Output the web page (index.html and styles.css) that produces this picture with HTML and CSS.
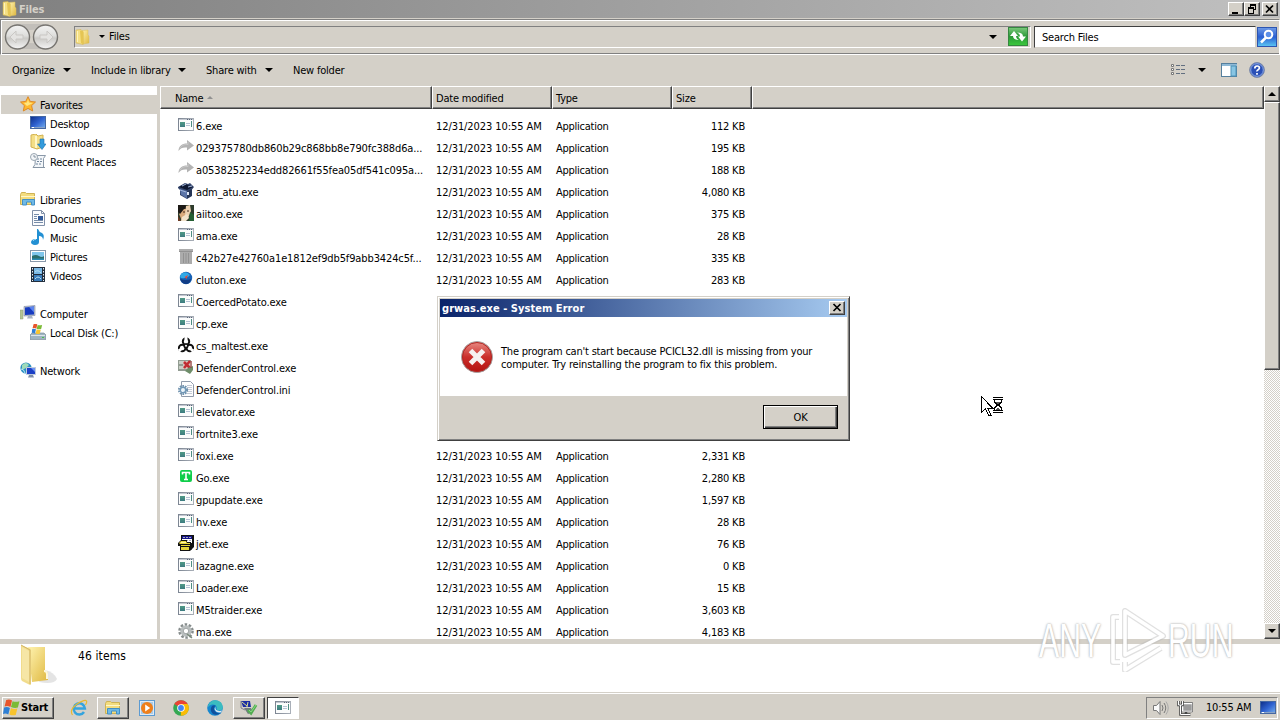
FILE: index.html
```html
<!DOCTYPE html>
<html lang="en">
<head>
    <meta charset="UTF-8">
    <meta name="viewport" content="width=device-width, initial-scale=1.0">
    <title>Files</title>
    <link rel="stylesheet" href="styles.css">
</head>
<body>
    <!-- Icon sprite -->
    <svg class="sprite" width="0" height="0">
        <defs>
            <linearGradient id="gold" x1="0" y1="0" x2="1" y2="1"><stop offset="0" stop-color="#fff3b0"/><stop offset="1" stop-color="#dfb840"/></linearGradient>
            <linearGradient id="blue" x1="0" y1="0" x2="1" y2="1"><stop offset="0" stop-color="#0c2c86"/><stop offset="0.5" stop-color="#2f62d0"/><stop offset="1" stop-color="#79b2ee"/></linearGradient>
            <linearGradient id="round" x1="0" y1="0" x2="0" y2="1"><stop offset="0" stop-color="#f4f4f3"/><stop offset="0.45" stop-color="#dededc"/><stop offset="0.55" stop-color="#cbcac7"/><stop offset="1" stop-color="#f5f5f5"/></linearGradient>
            <linearGradient id="red" x1="0" y1="0" x2="0" y2="1"><stop offset="0" stop-color="#e98d86"/><stop offset="0.5" stop-color="#cb2f2b"/><stop offset="1" stop-color="#b3110f"/></linearGradient>
            <linearGradient id="go" x1="0" y1="0" x2="0" y2="1"><stop offset="0" stop-color="#7cc87c"/><stop offset="0.5" stop-color="#2c9a38"/><stop offset="1" stop-color="#3cc93c"/></linearGradient>
            <linearGradient id="find" x1="0" y1="0" x2="0" y2="1"><stop offset="0" stop-color="#6f9be6"/><stop offset="0.5" stop-color="#2a5fd2"/><stop offset="1" stop-color="#5cc8f4"/></linearGradient>
            <linearGradient id="pane" x1="0" y1="0" x2="1" y2="0"><stop offset="0" stop-color="#7d8693"/><stop offset="1" stop-color="#a9afb8"/></linearGradient>
            <linearGradient id="pageedge" x1="0" y1="0" x2="0" y2="1"><stop offset="0" stop-color="#4f9a86"/><stop offset="1" stop-color="#3c7a80"/></linearGradient>
        </defs>
        <symbol id="i-exe" viewBox="0 0 16 16">
            <rect x="0.5" y="1.500" width="15" height="12" fill="#fbfcfc" stroke="url(#pane)"/>
            <path d="M1 2.500h14" stroke="#c3c8d1"/><path d="M9 2.500h1m1 0h1m1 0h1" stroke="#5b6678"/>
            <rect x="2" y="5" width="5" height="5" fill="url(#pageedge)"/>
            <path d="M8 6.500h4M8 8.500h4" stroke="#b5c3d5"/><path d="M13.500 4v6" stroke="#4d8d83"/>
        </symbol>
        <symbol id="i-share" viewBox="0 0 16 16">
            <path d="M.5 12C.5 7 4 4.500 9 4.500V1l7 5.500-7 5V8.500C5 8 2.500 9 .5 12z" fill="#b3b3b3"/><path d="M2 9.500C4 5.500 7 5.500 10 5.500V3" fill="none" stroke="#cacaca"/>
        </symbol>
        <symbol id="i-box" viewBox="0 0 16 16">
            <path d="M0 4l7-4 3 1 2-1 4 4-2 2.500v6.500l-5 3-7-4V7L0 5z" fill="#34456c"/><path d="M1 4l6-3 8 3-6 3z" fill="#0d1731"/>
            <path d="M2 6l7 2v7.500l-6-4z" fill="#5c75a8"/><path d="M9 8l5-2v6.500l-5 3z" fill="#253555"/><path d="M4 3l4-2M10 4l4-1M2 7l6 2" stroke="#a3b7dc"/><path d="M9 9h2v3H9z" fill="#dfe8f8"/>
        </symbol>
        <symbol id="i-photo" viewBox="0 0 16 16">
            <rect width="16" height="16" fill="#2d3b2c"/><path d="M3 3l5 1 2 6-3 6H4L1 9z" fill="#d9aa7c"/><path d="M0 0h7l3 3-4 1-4 5-2-2z" fill="#1b1815"/>
            <path d="M8 1l4-1 1 6-3 7-3-3z" fill="#ecd1b1"/><path d="M4 12l5-3 2 4-3 3H3z" fill="#f3e3ca"/><path d="M12 7l4 3v6h-5z" fill="#245f32"/><path d="M5 7h2M9 6h2" stroke="#402619"/><path d="M0 11l3 5H0z" fill="#6b3a22"/>
        </symbol>
        <symbol id="i-bin" viewBox="0 0 16 16">
            <path d="M1 0h14v3H1zM2 3h12v12H2z" fill="#acacac"/><path d="M5.500 4v10M8 4v10M10.500 4v10M1 2.500h14" stroke="#929292"/>
        </symbol>
        <symbol id="i-globe" viewBox="0 0 16 16">
            <circle cx="8" cy="7" r="6.200" fill="#1761b5"/><path d="M3 3q5-4 9 1-2 3-5 3-4 1-5-1z" fill="#31a8e6"/><path d="M2 8q6 2 11 0-1 5-5 5t-6-5z" fill="#113d86"/><path d="M10 4L8.500 8 6.500 6z" fill="#e34a3a"/>
        </symbol>
        <symbol id="i-hazard" viewBox="0 0 16 16">
            <g fill="none" stroke="#111" stroke-width="2"><circle cx="8" cy="4.500" r="3.200"/><circle cx="4.200" cy="11" r="3.300"/><circle cx="11.800" cy="11" r="3.300"/></g>
            <path d="M6.500 0h3v3h-3zM0 12.500l2.500-1.500 1.500 2-2.500 2.500zM16 12.500L13.500 11 12 13l2.500 2.500z" fill="#fff"/><circle cx="8" cy="8.800" r="2.600" fill="#111"/><circle cx="8" cy="8.800" r="1" fill="#fff"/>
        </symbol>
        <symbol id="i-defctl" viewBox="0 0 16 16">
            <rect x="0" y="1" width="13" height="11" fill="#929c92"/><path d="M1 2h4v3H1zM1 7h4v3H1z" fill="#c8cfc5"/><path d="M5 2h9v8H5z" fill="#d9c3bd"/>
            <path d="M6 3l6 6M12 2L6 9" stroke="#c02c31" stroke-width="2.500"/><path d="M10 9l5-2v4l-3 4-5-3z" fill="#6e8d69"/><path d="M13 2v7" stroke="#8c3c3a"/>
        </symbol>
        <symbol id="i-ini" viewBox="0 0 16 16">
            <path d="M3.500 0.500h9l3 3v12h-12z" fill="#fdfdfe" stroke="#909bab"/><path d="M9 4.500h5M9 6.500h5M10 8.500h4M10 10.500h4M9 12.500h5" stroke="#c3cad5"/>
            <circle cx="5" cy="9" r="4.100" fill="none" stroke="#6e91ad" stroke-width="2" stroke-dasharray="1.600 1"/><circle cx="5" cy="9" r="2.700" fill="#eaf3fa" stroke="#7198b7" stroke-width="1.400"/>
        </symbol>
        <symbol id="i-t" viewBox="0 0 16 16">
            <rect x="2" y="1" width="12" height="12" rx="2" fill="#0fce4a"/><path d="M4.500 5.500V3.500h7v2M8 3.500v7M6 10.500h4" fill="none" stroke="#fff" stroke-width="1.600"/>
        </symbol>
        <symbol id="i-jet" viewBox="0 0 16 16">
            <path d="M3 0h13v12l-3 3H3z" fill="#111"/><path d="M4 1h10v3H4z" fill="#15158c"/><path d="M4 4h10v4H4z" fill="#fff"/><path d="M5 2.500h8M5 5.500h8" stroke="#aab" stroke-dasharray="2 1"/>
            <path d="M0 8l3-3h6v2h4v3h1v4l-2 2H2v-5H0z" fill="#111"/><path d="M1 8l2-2h5l1 2h3v1H2zM3 10h9v1H3zM3 12h8v3H3z" fill="#e6d53a"/><path d="M3 7.500h5" stroke="#fff8ad"/>
        </symbol>
        <symbol id="i-gear" viewBox="0 0 16 16">
            <circle cx="8" cy="8" r="6.300" fill="none" stroke="#878d8d" stroke-width="3" stroke-dasharray="2.400 1.550"/><circle cx="8" cy="8" r="4.200" fill="#fff" stroke="#b9bebe" stroke-width="3"/><circle cx="8" cy="8" r="2.700" fill="none" stroke="#8b9191" stroke-width=".7"/><path d="M9 11l5 4" stroke="#7b8b7b" stroke-width="1.500"/>
        </symbol>
        <symbol id="i-folder" viewBox="0 0 16 16">
            <path d="M7 1.500l6-.5v5l1 1v7l-6 1z" fill="url(#gold)" stroke="#d8bd5c" stroke-width=".5"/><path d="M1 1l5-.5 2 2.500v12.500L1 14z" fill="#f5df83" stroke="#cfae4a" stroke-width=".5"/><path d="M5 1.500l3.500 1v13L6 14z" fill="#e5c553"/><path d="M2.500 2v11" stroke="#fdf3bd"/>
        </symbol>
        <symbol id="i-bigfolder" viewBox="0 0 40 44">
            <path d="M20 38q15 3 18-3-3-7-12-9z" fill="#d8d8d8" opacity=".7"/>
            <path d="M9 3h17v24q3 0 3 3v6l-16 2z" fill="url(#gold)"/><path d="M25 27q3 0 3 3v5" fill="none" stroke="#fdf7dc" stroke-width="2"/>
            <path d="M2 1l10 4v35q0 1-1 1l-8-4q-1-1-1-3z" fill="#f1dc8c"/><path d="M2 1l9 5v34" fill="none" stroke="#d3b566"/><path d="M3 3l7 4v31l-7-4z" fill="#f6e6a6"/>
        </symbol>
        <symbol id="i-star" viewBox="0 0 16 16"><path d="M8 0.700l2.200 4.700 5.300.6-3.900 3.600 1.100 5.400L8 12.400 3.300 15l1.100-5.400L.5 6l5.300-.6z" fill="#ffb82e" stroke="#dc8a2a"/><path d="M8 3L9 6.500l4 .5-6 3-3-3 3-.5z" fill="#ffe680"/></symbol>
        <symbol id="i-desktop" viewBox="0 0 16 16"><rect x=".5" y="1.500" width="15" height="12" fill="url(#blue)" stroke="#4467a2"/><path d="M1 12.500h14" stroke="#8aa3c7"/><path d="M2 12.500h2" stroke="#fff"/></symbol>
        <symbol id="i-down" viewBox="0 0 16 16"><path d="M1 1l5-1 2 2 5-1v12l-6 2-6-2z" fill="#f4de86" stroke="#d2b250"/><path d="M6 2v12" stroke="#fff6c6" stroke-width="2"/><path d="M10 5h4v5h2l-4 5.500L7.500 10H10z" fill="#339bdc" stroke="#1870af" stroke-width=".6"/></symbol>
        <symbol id="i-recent" viewBox="0 0 16 16"><path d="M5.500 2.500h10l-2 3v9H3l2-3z" fill="#f3f6f9" stroke="#8a98a8"/><path d="M7 6h5M7 8.500h5M6 11h5" stroke="#73879d" stroke-dasharray="2 1"/><circle cx="4" cy="4" r="3.500" fill="#f2f5f8" stroke="#9aa6b1"/><path d="M4 2v2h2" fill="none" stroke="#6d7c8b" stroke-width=".8"/><path d="M3 14.500h12" stroke="#8795a4"/></symbol>
        <symbol id="i-lib" viewBox="0 0 16 16"><path d="M.5 3.500l1-2h4l1 1h8v11H.5z" fill="#f3dc7e" stroke="#cfb255"/><path d="M1 5.500h14" stroke="#fff7ca"/><path d="M2.500 14V8.500h12V14h-3v-3h-5v3z" fill="#6fb9e6" stroke="#438fc4"/></symbol>
        <symbol id="i-doc" viewBox="0 0 16 16"><path d="M2.500.5h9l3 3v12h-12z" fill="#fafbfd" stroke="#8090a8"/><path d="M11.500.5v3h3" fill="none" stroke="#8090a8"/><path d="M4 4.500h5M4 6.500h3M4 8.500h3M4 10.500h9M4 12.500h9" stroke="#768ca9"/><path d="M8 6h5v4H8z" fill="#305a9a"/></symbol>
        <symbol id="i-music" viewBox="0 0 16 16"><path d="M8 0q1 3 4 4 3 2 1 7 0-4-4-4v6q0 3-4 3-4-.5-4-3 .5-3 5-3H7V0z" fill="#2390d3"/><path d="M3 12q1-2 3-1.500" stroke="#90d4f5" fill="none"/></symbol>
        <symbol id="i-pic" viewBox="0 0 16 16"><rect x=".5" y="2.500" width="15" height="11" fill="#fff" stroke="#8999ab"/><path d="M2 4h12v8H2z" fill="#80c6eb"/><path d="M2 8q4-2 7 0t5 0v4H2z" fill="#2c6e6c"/><path d="M2 10.500h12V12H2z" fill="#2a8bb3"/></symbol>
        <symbol id="i-video" viewBox="0 0 16 16"><path d="M1 0h14v15H1z" fill="#222e3d"/><path d="M4 1h8v6H4z" fill="#79b8e5"/><path d="M4 8h8v6H4z" fill="#3a7cba"/><path d="M2.500 1v13M13.500 1v13" stroke="#e5edf4" stroke-dasharray="1.500 1.500"/><path d="M5 5q3-3 6 1M5 12q3-4 6 0" fill="none" stroke="#bae0f4"/></symbol>
        <symbol id="i-computer" viewBox="0 0 16 16"><path d="M0 5h3v9H0z" fill="#b5c594" stroke="#8e9c7a" stroke-width=".5"/><path d="M4 1.500l11-1v10L4 11z" fill="#b9c2d0" stroke="#7d889d" stroke-width=".6"/><path d="M5 2.500l9-1v8L5 10z" fill="#173bc0"/><path d="M9 2l5-.5v6z" fill="#5b84ef"/><path d="M8 11h4l1 2.500H7z" fill="#a9b3c4"/></symbol>
        <symbol id="i-disk" viewBox="0 0 16 16"><path d="M2 9h12l2 2v4.500H0V11z" fill="#9fb4c1" stroke="#71838e" stroke-width=".6"/><path d="M1 11.500h14" stroke="#dbe5ea"/><path d="M12 13.500h2" stroke="#4abf4a"/><use href="#i-flag" x="1.500" y="-.5" width="11" height="11"/></symbol>
        <symbol id="i-flag" viewBox="0 0 16 16"><path d="M3 1q3-1.500 5.500.5L7 7.500Q4.500 6 1.500 7z" fill="#e8552c"/><path d="M9 2q3 1 6.500 0L14 8q-3 1-6.500-.5z" fill="#7bbb36"/><path d="M1 8q3-1 5.500.5L5 14.500q-2.500-1.500-5-.5z" fill="#2f7fd4"/><path d="M7.500 8.500q3 1.500 6 .5L12 15q-3 1-6-.5z" fill="#f8c42f"/></symbol>
        <symbol id="i-net" viewBox="0 0 16 16"><circle cx="6" cy="6" r="5.600" fill="#2b8fc1"/><path d="M2 3q4-4 7 0L6 6 2 8z" fill="#9fdbb8"/><path d="M1 7q3 0 4 4" stroke="#bbe6f6" fill="none"/><path d="M6.500 5.500h9v7h-9z" fill="#1c40c6" stroke="#c0cbdc"/><path d="M11 6h4v4z" fill="#6c92f2"/><path d="M9 13h4l1 2.500H8z" fill="#8090aa"/></symbol>
        <symbol id="i-ie" viewBox="0 0 18 18"><path d="M14 13a5.600 5.600 0 1 1 .9-3.500H5" fill="none" stroke="#35a4de" stroke-width="2.500"/><path d="M2.500 16Q-1 11 7 5q8-5 9.500-3 .7 1-1 4" fill="none" stroke="#e8b92f" stroke-width="1.200"/></symbol>
        <symbol id="i-wmp" viewBox="0 0 16 16"><rect x=".5" y=".5" width="15" height="15" fill="#dfeaf4" stroke="#5c9bd2"/><rect x="2" y="2" width="12" height="12" fill="#a9cbe8"/><circle cx="8" cy="8" r="6" fill="#ef7f1a"/><path d="M6.200 4.500l5 3.500-5 3.500z" fill="#fff"/></symbol>
        <symbol id="i-chrome" viewBox="0 0 16 16"><circle cx="8" cy="8" r="7.800" fill="#34a853"/><path d="M8 8L1.250 4.100A7.800 7.800 0 0 1 14.750 4.100H8z" fill="#ea4335"/><path d="M8 8l-.2 7.800A7.800 7.800 0 0 0 14.750 4.100H8z" fill="#fbbc05"/><circle cx="8" cy="8" r="3.800" fill="#fff"/><circle cx="8" cy="8" r="2.900" fill="#4285f4"/></symbol>
        <symbol id="i-edge" viewBox="0 0 16 16"><circle cx="8" cy="8" r="7.800" fill="#1687cf"/><path d="M1 6Q3 .2 8.500.2 15.500 1 15.800 7q0 3.500-4 3.500-3-.5-2-3Q9 4 5 4.500 2 5 1 7z" fill="#3bbcc0"/><path d="M5 6q-3 4 1 8 4 2 8-1-6 1-7-4 0-3 2-3-2-1.500-4 0z" fill="#11509c"/><path d="M8.500 6.500q-1 4 4 4.500l3-.5-2 2Q9 13 7.500 9z" fill="#dfe9f1"/></symbol>
        <symbol id="i-tool" viewBox="0 0 18 16"><path d="M1 1h9l1 6H3z" fill="#1a2da5"/><path d="M2 2l5 4M8 2l-1 5" stroke="#dadf8a"/><path d="M1 1v7l4 2" stroke="#7c828b" fill="none"/><path d="M4 8h7l2 4-5 2z" fill="#707b81"/><path d="M8 10l3 3 5-8" stroke="#52ac51" stroke-width="3" fill="none"/><path d="M9 10l2 2 5-7" stroke="#86d982" fill="none"/></symbol>
        <symbol id="i-speaker" viewBox="0 0 18 16"><path d="M1.500 5.500h3L8 1.500v13L4.500 10.500h-3z" fill="#fafafa" stroke="#777"/><path d="M10 5q2 3 0 6M12 3q3.500 5 0 10" fill="none" stroke="#777"/><path d="M14 1.500q4.500 6.500 0 13" fill="none" stroke="#aaa"/></symbol>
        <symbol id="i-lan" viewBox="0 0 16 16"><path d="M5.500 3.500h10v8h-10z" fill="#9b9b9b" stroke="#fff" stroke-width="1.500"/><path d="M4.500 2.500h11v9.500h-11z" fill="none" stroke="#555" stroke-width=".7"/><path d="M1.500 1v4h4V1M3.500 5v9.500h10M9 12v2" fill="none" stroke="#444" stroke-width="2.500"/><path d="M1.500 1v4h4V1M3.500 5v9.500h10" fill="none" stroke="#fff"/></symbol>
    </svg>

    <div class="window">
        <div class="titlebar">
            <svg class="icon"><use href="#i-folder"/></svg>
            <span class="title">Files</span>
            <div class="win-buttons">
                <button class="win-btn"><svg width="14" height="12"><path d="M3 9h6v2H3z"/></svg></button>
                <button class="win-btn"><svg width="14" height="12"><path d="M5 1h6v6H9V6h1V3H6v1H5zM3 4h6v7H3zM4 6v4h4V6z" fill-rule="evenodd"/></svg></button>
                <button class="win-btn close"><svg width="14" height="12"><path d="M3 2.500l7 7M10 2.500l-7 7" stroke="#000" stroke-width="1.700"/></svg></button>
            </div>
        </div>

        <div class="navbar">
            <svg class="navs" width="60" height="28">
                <path d="M14 1h28v4q-14 4-28 0zM14 26h28v-4q-14-4-28 0z" fill="#c2bfba"/>
                <circle cx="15.500" cy="14" r="12" fill="url(#round)" stroke="#777571" stroke-width="1.400"/>
                <circle cx="43.500" cy="14" r="12" fill="url(#round)" stroke="#777571" stroke-width="1.400"/>
                <path d="M14 8l-6 6 6 6v-4h7v-4h-7zM45 8l6 6-6 6v-4h-7v-4h7z" fill="#e4e3e1" stroke="#c9c7c4"/>
            </svg>
            <div class="address">
                <svg class="icon"><use href="#i-folder"/></svg>
                <i class="arrow small"></i>
                <span>Files</span>
                <i class="arrow last"></i>
                <svg class="refresh" width="20" height="19"><rect x=".5" y=".5" width="19" height="18" fill="url(#go)" stroke="#358740"/><path d="M2 9l4-5 4 5H8q0 3 3 4-6 0-6-4z" fill="#fff"/><path d="M18 9.500l-4 5-4-5h2q0-3-3-4 6 0 6 4z" fill="#fff"/></svg>
            </div>
            <div class="search">Search Files</div>
            <svg class="find" width="20" height="20"><rect x=".5" y=".5" width="19" height="19" fill="url(#find)" stroke="#2d55b0"/><circle cx="11.500" cy="7.500" r="3.800" fill="#5c8fe8" stroke="#fff" stroke-width="2"/><path d="M9 10.500l-5 5" stroke="#fff" stroke-width="2.500"/></svg>
        </div>

        <div class="toolbar">
            <span class="tool organize">Organize <i class="arrow"></i></span>
            <span class="tool include">Include in library <i class="arrow"></i></span>
            <span class="tool share">Share with <i class="arrow"></i></span>
            <span class="tool">New folder</span>
            <div class="views">
                <svg width="16" height="14"><g fill="#fff" stroke="#777"><path d="M1.500 1.500h2v2h-2zM1.500 5.500h2v2h-2zM1.500 9.500h2v2h-2z"/></g><path d="M6 2.500h4m1 0h4M6 6.500h4m1 0h4M6 10.500h4m1 0h4" stroke="#626f80"/></svg>
                <i class="arrow"></i>
                <svg class="preview" width="17" height="14"><rect x=".5" y=".5" width="15" height="13" fill="#fff" stroke="#557f9d"/><path d="M1 2h15" stroke="#8eb9d6" stroke-width="2"/><path d="M10 3h5v10h-5z" fill="#88c5e3" stroke="#4c92b8"/></svg>
                <svg class="help" width="16" height="16"><circle cx="8" cy="8" r="7.400" fill="#2b50b6" stroke="#7d8ba8"/><circle cx="8" cy="8" r="6.300" fill="none" stroke="#8daae6"/><path d="M5.800 6.500q0-2.500 2.300-2.500t2.300 2q0 1-1.300 1.700T8 9.500M8 11v1.700" fill="none" stroke="#fff" stroke-width="1.700"/></svg>
            </div>
        </div>

        <div class="main">
            <div class="sidebar">
                <div class="side-item top selected"><svg class="icon"><use href="#i-star"/></svg>Favorites</div>
                <div class="side-item"><svg class="icon"><use href="#i-desktop"/></svg>Desktop</div>
                <div class="side-item"><svg class="icon"><use href="#i-down"/></svg>Downloads</div>
                <div class="side-item"><svg class="icon"><use href="#i-recent"/></svg>Recent Places</div>
                <div class="side-item top group"><svg class="icon"><use href="#i-lib"/></svg>Libraries</div>
                <div class="side-item"><svg class="icon"><use href="#i-doc"/></svg>Documents</div>
                <div class="side-item"><svg class="icon"><use href="#i-music"/></svg>Music</div>
                <div class="side-item"><svg class="icon"><use href="#i-pic"/></svg>Pictures</div>
                <div class="side-item"><svg class="icon"><use href="#i-video"/></svg>Videos</div>
                <div class="side-item top group"><svg class="icon"><use href="#i-computer"/></svg>Computer</div>
                <div class="side-item"><svg class="icon"><use href="#i-disk"/></svg>Local Disk (C:)</div>
                <div class="side-item top group"><svg class="icon"><use href="#i-net"/></svg>Network</div>
            </div>

            <div class="list">
                <div class="list-head">
                    <div class="head name">Name <i class="sort"></i></div>
                    <div class="head">Date modified</div>
                    <div class="head">Type</div>
                    <div class="head size">Size</div>
                    <div class="head rest"></div>
                </div>
                <div class="rows">
                    <div class="row"><svg class="icon"><use href="#i-exe"/></svg><span class="file">6.exe</span><span class="date">12/31/2023 10:55 AM</span><span class="type">Application</span><span class="kb">112 KB</span></div>
                    <div class="row"><svg class="icon"><use href="#i-share"/></svg><span class="file">029375780db860b29c868bb8e790fc388d6a...</span><span class="date">12/31/2023 10:55 AM</span><span class="type">Application</span><span class="kb">195 KB</span></div>
                    <div class="row"><svg class="icon"><use href="#i-share"/></svg><span class="file">a0538252234edd82661f55fea05df541c095a...</span><span class="date">12/31/2023 10:55 AM</span><span class="type">Application</span><span class="kb">188 KB</span></div>
                    <div class="row"><svg class="icon"><use href="#i-box"/></svg><span class="file">adm_atu.exe</span><span class="date">12/31/2023 10:55 AM</span><span class="type">Application</span><span class="kb">4,080 KB</span></div>
                    <div class="row"><svg class="icon"><use href="#i-photo"/></svg><span class="file">aiitoo.exe</span><span class="date">12/31/2023 10:55 AM</span><span class="type">Application</span><span class="kb">375 KB</span></div>
                    <div class="row"><svg class="icon"><use href="#i-exe"/></svg><span class="file">ama.exe</span><span class="date">12/31/2023 10:55 AM</span><span class="type">Application</span><span class="kb">28 KB</span></div>
                    <div class="row"><svg class="icon"><use href="#i-bin"/></svg><span class="file">c42b27e42760a1e1812ef9db5f9abb3424c5f...</span><span class="date">12/31/2023 10:55 AM</span><span class="type">Application</span><span class="kb">335 KB</span></div>
                    <div class="row"><svg class="icon"><use href="#i-globe"/></svg><span class="file">cluton.exe</span><span class="date">12/31/2023 10:55 AM</span><span class="type">Application</span><span class="kb">283 KB</span></div>
                    <div class="row"><svg class="icon"><use href="#i-exe"/></svg><span class="file">CoercedPotato.exe</span></div>
                    <div class="row"><svg class="icon"><use href="#i-exe"/></svg><span class="file">cp.exe</span></div>
                    <div class="row"><svg class="icon"><use href="#i-hazard"/></svg><span class="file">cs_maltest.exe</span></div>
                    <div class="row"><svg class="icon"><use href="#i-defctl"/></svg><span class="file">DefenderControl.exe</span></div>
                    <div class="row"><svg class="icon"><use href="#i-ini"/></svg><span class="file">DefenderControl.ini</span></div>
                    <div class="row"><svg class="icon"><use href="#i-exe"/></svg><span class="file">elevator.exe</span></div>
                    <div class="row"><svg class="icon"><use href="#i-exe"/></svg><span class="file">fortnite3.exe</span></div>
                    <div class="row"><svg class="icon"><use href="#i-exe"/></svg><span class="file">foxi.exe</span><span class="date">12/31/2023 10:55 AM</span><span class="type">Application</span><span class="kb">2,331 KB</span></div>
                    <div class="row"><svg class="icon"><use href="#i-t"/></svg><span class="file">Go.exe</span><span class="date">12/31/2023 10:55 AM</span><span class="type">Application</span><span class="kb">2,280 KB</span></div>
                    <div class="row"><svg class="icon"><use href="#i-exe"/></svg><span class="file">gpupdate.exe</span><span class="date">12/31/2023 10:55 AM</span><span class="type">Application</span><span class="kb">1,597 KB</span></div>
                    <div class="row"><svg class="icon"><use href="#i-exe"/></svg><span class="file">hv.exe</span><span class="date">12/31/2023 10:55 AM</span><span class="type">Application</span><span class="kb">28 KB</span></div>
                    <div class="row"><svg class="icon"><use href="#i-jet"/></svg><span class="file">jet.exe</span><span class="date">12/31/2023 10:55 AM</span><span class="type">Application</span><span class="kb">76 KB</span></div>
                    <div class="row"><svg class="icon"><use href="#i-exe"/></svg><span class="file">lazagne.exe</span><span class="date">12/31/2023 10:55 AM</span><span class="type">Application</span><span class="kb">0 KB</span></div>
                    <div class="row"><svg class="icon"><use href="#i-exe"/></svg><span class="file">Loader.exe</span><span class="date">12/31/2023 10:55 AM</span><span class="type">Application</span><span class="kb">15 KB</span></div>
                    <div class="row"><svg class="icon"><use href="#i-exe"/></svg><span class="file">M5traider.exe</span><span class="date">12/31/2023 10:55 AM</span><span class="type">Application</span><span class="kb">3,603 KB</span></div>
                    <div class="row"><svg class="icon"><use href="#i-gear"/></svg><span class="file">ma.exe</span><span class="date">12/31/2023 10:55 AM</span><span class="type">Application</span><span class="kb">4,183 KB</span></div>
                </div>
            </div>

            <div class="scrollbar">
                <div class="scroll-btn"><i class="arrow up"></i></div>
                <div class="thumb"></div>
                <div class="track"></div>
                <div class="scroll-btn"><i class="arrow"></i></div>
            </div>
        </div>

        <div class="details">
            <svg width="40" height="44"><use href="#i-bigfolder"/></svg>
            <span>46 items</span>
        </div>
    </div>

    <div class="taskbar">
        <button class="start"><svg width="17" height="17"><use href="#i-flag"/></svg>Start</button>
        <div class="task ie"><svg width="18" height="18"><use href="#i-ie"/></svg></div>
        <div class="task raised"><svg class="icon"><use href="#i-lib"/></svg></div>
        <div class="task"><svg class="icon"><use href="#i-wmp"/></svg></div>
        <div class="task"><svg class="icon"><use href="#i-chrome"/></svg></div>
        <div class="task"><svg class="icon"><use href="#i-edge"/></svg></div>
        <div class="task raised"><svg width="18" height="16"><use href="#i-tool"/></svg></div>
        <div class="task pressed"><svg class="icon"><use href="#i-exe"/></svg></div>
        <div class="tray">
            <svg width="18" height="16"><use href="#i-speaker"/></svg>
            <svg class="icon lan"><use href="#i-lan"/></svg>
            <span class="clock">10:55 AM</span>
            <svg class="icon"><use href="#i-desktop"/></svg>
        </div>
    </div>

    <div class="dialog">
        <div class="dialog-title">
            <span>grwas.exe - System Error</span>
            <button class="win-btn"><svg width="14" height="12"><path d="M3.500 2l7 7M10.500 2l-7 7" stroke="#000" stroke-width="1.700"/></svg></button>
        </div>
        <div class="dialog-body">
            <svg width="34" height="34"><circle cx="17" cy="17" r="15.500" fill="url(#red)" stroke="#a5a5a5"/><circle cx="17" cy="17" r="14.500" fill="none" stroke="#b22824"/><path d="M10.500 10.500l13 13M23.500 10.500l-13 13" stroke="#f6f1f1" stroke-width="5"/></svg>
            <p>The program can't start because PCICL32.dll is missing from your<br><span class="line2">computer. Try reinstalling the program to fix this problem.</span></p>
        </div>
        <div class="dialog-footer"><button class="ok">OK</button></div>
    </div>

    <!-- Busy cursor -->
    <svg class="cursor" width="24" height="22" shape-rendering="crispEdges">
        <path d="M.5.500v16l4-4 3 7h2.500l-3-7h5z" fill="#fff" stroke="#000"/>
        <path d="M12 1.500h10M12 16.500h10M12 3.500h10M12 14.500h10" stroke="#000"/><path d="M13.500 3v3l3 3-3 3v3M20.500 3v3l-3 3 3 3v3" fill="none" stroke="#000"/><path d="M15 6h4l-2 3zM15 14l2-3 2 3z" fill="#555"/>
    </svg>

    <div class="watermark">
        <span class="any">ANY</span>
        <svg width="60" height="64"><g fill="none" stroke-linejoin="round"><path d="M17 3v44l38-19zM11 9H5v45h7M17 54v8l36-22" stroke="#bbb" stroke-width="6" opacity=".45"/><path d="M17 3v44l38-19zM11 9H5v45h7M17 54v8l36-22" stroke="#fff" stroke-width="3.500"/></g></svg>
        <span class="run">RUN</span>
    </div>
</body>
</html>
```
FILE: styles.css
```css
* {
    box-sizing: border-box;
}
body {
    margin: 0;
    width: 1280px;
    height: 720px;
    overflow: hidden;
    background-color: #d4d0c8;
    color: #000;
    font-family: Tahoma, "DejaVu Sans Condensed", "DejaVu Sans", sans-serif;
    font-stretch: condensed;
    font-size: 11px;
    letter-spacing: -0.2px;
}
button {
    font-family: inherit;
    font-size: inherit;
    letter-spacing: inherit;
    color: #000;
    padding: 0;
}
svg {
    display: block;
    flex: none;
}
.sprite {
    position: absolute;
}
.icon {
    width: 16px;
    height: 16px;
}
.window {
    height: 692px;
    display: flex;
    flex-direction: column;
}
.titlebar {
    height: 18px;
    display: flex;
    align-items: center;
    padding: 0 2px;
    background: linear-gradient(to right, #808080, #c0c0c0);
    color: #d4d0c8;
    font-weight: bold;
}
.title {
    margin-left: 1px;
}
.win-buttons {
    display: flex;
    margin-left: auto;
}
.win-btn {
    width: 16px;
    height: 14px;
    background-color: #d4d0c8;
    border: 1px solid;
    border-color: #fff #404040 #404040 #fff;
    box-shadow: inset -1px -1px #808080;
}
.win-btn.close {
    margin-left: 2px;
}
.arrow {
    display: inline-block;
    border: 4px solid transparent;
    border-top-color: #000;
    border-bottom: 0;
}
.arrow.small {
    border-width: 3px;
    border-bottom: 0;
}
.arrow.up {
    border: 4px solid transparent;
    border-bottom-color: #000;
    border-top: 0;
}

/* Address and search */
.navbar {
    height: 36px;
    margin-top: 1px;
    display: flex;
    align-items: center;
    padding: 0 2px 0 1px;
    border: 1px solid;
    border-color: #808080 #fff #fff #808080;
    box-shadow: inset 1px 1px #fff, inset 0 -1px #808080;
}
.address {
    width: 957px;
    height: 22px;
    margin-left: 12px;
    display: flex;
    align-items: center;
    padding-bottom: 1px;
    border: 1px solid;
    border-color: #808080 #fff #fff #808080;
}
.address .small {
    margin: 0 4px 0 8px;
}
.address .last {
    margin-left: auto;
}
.refresh {
    margin: 0 2px 0 11px;
}
.search {
    width: 222px;
    height: 22px;
    margin-left: 3px;
    padding-left: 7px;
    line-height: 21px;
    background-color: #fff;
    border: 1px solid;
    border-color: #404040 #d4d0c8 #d4d0c8 #404040;
}
.find {
    margin-left: 1px;
}

.toolbar {
    height: 31px;
    display: flex;
    align-items: center;
    padding: 0 0 1px 12px;
}
.tool {
    display: flex;
    align-items: center;
    justify-content: space-between;
}
.organize {
    width: 59px;
    margin-right: 20px;
}
.include {
    width: 95px;
    margin-right: 20px;
}
.share {
    width: 67px;
    margin-right: 20px;
}
.views {
    display: flex;
    align-items: center;
    margin-left: auto;
    padding-right: 15px;
}
.views .arrow {
    margin-left: 12px;
}
.preview {
    margin-left: 15px;
}
.help {
    margin-left: 11px;
}

.main {
    height: 553px;
    display: flex;
}
.sidebar {
    width: 160px;
    padding: 9px 0 0 1px;
    background-color: #fff;
    border-right: 3px solid #d4d0c8;
}
.side-item {
    height: 19px;
    display: flex;
    padding-left: 29px;
    line-height: 21px;
}
.side-item .icon {
    margin: 1px 4px 0 0;
}
.side-item.top {
    padding-left: 19px;
}
.side-item.group {
    margin-top: 19px;
}
.side-item.selected {
    background-color: #d4d0c8;
}

/* File list */
.list {
    width: 1104px;
    background-color: #fff;
    overflow: hidden;
}
.list-head {
    height: 23px;
    display: flex;
}
.head {
    width: 120px;
    padding: 0 0 0 3px;
    line-height: 23px;
    background-color: #d4d0c8;
    border: 1px solid;
    border-color: #fff #404040 #404040 #fff;
    box-shadow: inset -1px -1px #808080;
}
.head.name {
    width: 272px;
    padding-left: 14px;
}
.head.size {
    width: 80px;
}
.head.rest {
    width: 512px;
}
.sort {
    display: inline-block;
    margin-left: 1px;
    vertical-align: 3px;
    border: 3px solid transparent;
    border-bottom-color: #909090;
    border-top: 0;
}
.rows {
    padding: 6px 0 0 18px;
}
.row {
    height: 22px;
    display: flex;
    line-height: 24px;
    white-space: pre;
}
.row .icon {
    margin: 2px 2px 0 0;
}
.file {
    width: 240px;
    letter-spacing: -0.12px;
}
.date {
    width: 120px;
    letter-spacing: -0.08px;
}
.type {
    width: 110px;
    letter-spacing: -0.25px;
}
.kb {
    width: 79px;
    text-align: right;
}

.scrollbar {
    width: 16px;
    display: flex;
    flex-direction: column;
    background: repeating-conic-gradient(#fff 0 25%, #d4d0c8 0 50%) 0 0 / 2px 2px;
}
.scroll-btn, .thumb {
    background-color: #d4d0c8;
    border: 1px solid;
    border-color: #fff #404040 #404040 #fff;
    box-shadow: inset -1px -1px #808080;
}
.scroll-btn {
    height: 16px;
    display: flex;
    align-items: center;
    justify-content: center;
}
.thumb {
    height: 268px;
}
.track {
    flex: 1;
}
.details {
    height: 53px;
    display: flex;
    padding-left: 19px;
    background-color: #fff;
    border-top: 5px solid #d4d0c8;
    font-size: 12px;
    letter-spacing: 0.1px;
}
.details span {
    margin: 5px 0 0 19px;
}

/* Taskbar */
.taskbar {
    height: 28px;
    display: flex;
    align-items: center;
    padding: 3px 2px 1px;
    border-top: 1px solid #d4d0c8;
    box-shadow: inset 0 1px #fff;
}
.start, .raised {
    background-color: #d4d0c8;
    border: 1px solid;
    border-color: #fff #404040 #404040 #fff;
    box-shadow: inset -1px -1px #808080;
}
.start {
    width: 52px;
    height: 22px;
    display: flex;
    align-items: center;
    padding-left: 0;
    font-weight: bold;
}
.start svg {
    margin-right: 1px;
}
.task {
    width: 32px;
    height: 22px;
    margin-right: 2px;
    display: flex;
    align-items: center;
    justify-content: center;
}
.task.ie {
    margin-left: 9px;
}
.pressed {
    background-color: #fff;
    border: 1px solid;
    border-color: #404040 #fff #fff #404040;
}
.tray {
    width: 132px;
    height: 22px;
    margin-left: auto;
    display: flex;
    align-items: center;
    padding-left: 5px;
    border: 1px solid;
    border-color: #808080 #fff #fff #808080;
}
.lan {
    margin-left: 7px;
}
.clock {
    width: 47px;
    margin: 0 7px 0 13px;
    white-space: nowrap;
}

/* Error dialog */
.dialog {
    position: absolute;
    left: 437px;
    top: 296px;
    width: 413px;
    height: 145px;
    padding: 2px;
    background-color: #d4d0c8;
    border: 1px solid;
    border-color: #d4d0c8 #404040 #404040 #d4d0c8;
    box-shadow: inset 1px 1px #fff, inset -1px -1px #808080;
}
.dialog-title {
    height: 18px;
    display: flex;
    align-items: center;
    justify-content: space-between;
    padding: 0 2px;
    background: linear-gradient(to right, #0a246a, #a6caf0);
    color: #fff;
    font-weight: bold;
    letter-spacing: 0.05px;
}
.dialog-body {
    height: 79px;
    display: flex;
    padding: 23px 0 0 20px;
    background-color: #fff;
}
.dialog-body p {
    margin: 5px 0 0 7px;
    line-height: 13px;
    letter-spacing: -0.21px;
    white-space: nowrap;
}
.line2 {
    letter-spacing: -0.18px;
}
.dialog-footer {
    display: flex;
    justify-content: flex-end;
    padding: 9px 9px 0 0;
}
.ok {
    width: 75px;
    height: 24px;
    background-color: #d4d0c8;
    border: 1px solid #000;
    box-shadow: inset 1px 1px #fff, inset -1px -1px #404040, inset -2px -2px #808080;
}
.cursor {
    position: absolute;
    left: 981px;
    top: 396px;
}
.watermark {
    position: absolute;
    left: 1039px;
    top: 608px;
    width: 200px;
    display: flex;
    align-items: center;
    color: #fff;
    font-family: "Liberation Sans", sans-serif;
    font-size: 48px;
    letter-spacing: 0;
    text-shadow: 0 0 3px #aaa, 0 0 2px #ccc;
}
.watermark svg {
    margin-left: 4px;
}
.any, .run {
    width: 65px;
    transform: scaleX(0.63);
    transform-origin: left;
}
```
